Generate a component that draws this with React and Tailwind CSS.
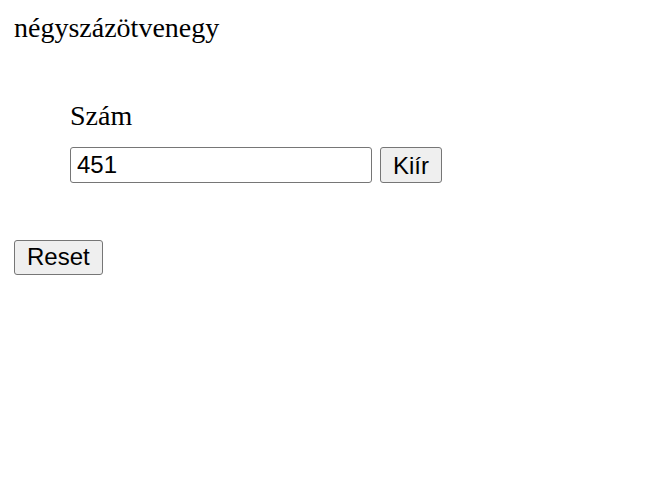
import React, { useState } from "react";

export default function App() {
  const [value, setValue] = useState("451");

  return (
    <div className="min-h-screen bg-white px-[14px] pt-[12px] font-['Liberation_Serif',serif] text-black">
      <div className="text-[28px] leading-[31px]">négyszázötvenegy</div>

      <div className="ml-[56px] mt-[57px]">
        <div className="text-[28px] leading-[31px]">Szám</div>
        <div className="mt-[16px] flex items-center gap-[8px]">
          <input
            value={value}
            onChange={(e) => setValue(e.target.value)}
            className="h-[36px] w-[302px] rounded-[3px] border border-[#767676] bg-white px-[6px] pb-[1px] font-['Liberation_Sans',Arial,sans-serif] text-[24px] outline-none"
          />
          <button className="h-[36px] rounded-[3px] border border-[#767676] bg-[#efefef] px-[12px] pb-[1px] font-['Liberation_Sans',Arial,sans-serif] text-[24px]">
            Kiír
          </button>
        </div>
      </div>

      <div className="mt-[57px] flex">
        <button className="h-[35px] rounded-[3px] border border-[#767676] bg-[#efefef] px-[12px] pb-[2px] font-['Liberation_Sans',Arial,sans-serif] text-[24px] leading-none">
          Reset
        </button>
      </div>
    </div>
  );
}
